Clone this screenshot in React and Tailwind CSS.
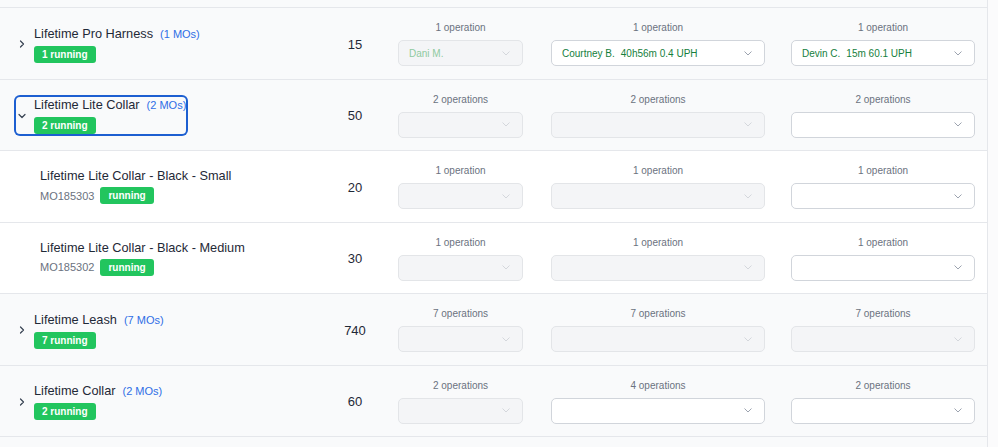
import React from 'react';

const ROWS = [
  {
    kind: 'parent', name: 'Lifetime Pro Harness', mos: '(1 MOs)', running: '1 running', qty: 15,
    ops: [
      { label: '1 operation', enabled: false, who: 'Dani M.' },
      { label: '1 operation', enabled: true, who: 'Courtney B.', stat: '40h56m 0.4 UPH' },
      { label: '1 operation', enabled: true, who: 'Devin C.', stat: '15m 60.1 UPH' },
    ],
  },
  {
    kind: 'parent', open: true, focused: true, name: 'Lifetime Lite Collar', mos: '(2 MOs)', running: '2 running', qty: 50,
    ops: [
      { label: '2 operations', enabled: false },
      { label: '2 operations', enabled: false },
      { label: '2 operations', enabled: true },
    ],
  },
  {
    kind: 'child', name: 'Lifetime Lite Collar - Black - Small', mo: 'MO185303', qty: 20,
    ops: [
      { label: '1 operation', enabled: false },
      { label: '1 operation', enabled: false },
      { label: '1 operation', enabled: true },
    ],
  },
  {
    kind: 'child', name: 'Lifetime Lite Collar - Black - Medium', mo: 'MO185302', qty: 30,
    ops: [
      { label: '1 operation', enabled: false },
      { label: '1 operation', enabled: false },
      { label: '1 operation', enabled: true },
    ],
  },
  {
    kind: 'parent', name: 'Lifetime Leash', mos: '(7 MOs)', running: '7 running', qty: 740,
    ops: [
      { label: '7 operations', enabled: false },
      { label: '7 operations', enabled: false },
      { label: '7 operations', enabled: false },
    ],
  },
  {
    kind: 'parent', name: 'Lifetime Collar', mos: '(2 MOs)', running: '2 running', qty: 60,
    ops: [
      { label: '2 operations', enabled: false },
      { label: '4 operations', enabled: true },
      { label: '2 operations', enabled: true },
    ],
  },
];

const COL_CLASSES = ['w-[125px] ml-2', 'w-[214px] ml-[28px]', 'w-[184px] ml-[26px]'];

const Chevron = ({ open, className = '' }) => (
  <svg width="8" height="8" viewBox="0 0 8 8" className={className} fill="none">
    {open ? (
      <polyline points="1,2.5 4,5.5 7,2.5" stroke="currentColor" strokeWidth="1.2" strokeLinecap="round" strokeLinejoin="round" />
    ) : (
      <polyline points="2.5,1 5.5,4 2.5,7" stroke="currentColor" strokeWidth="1.2" strokeLinecap="round" strokeLinejoin="round" />
    )}
  </svg>
);

const Badge = ({ children }) => (
  <span className="block h-[17px] px-2 rounded-[3px] bg-[#22c55e] text-white text-[10px] font-bold leading-[17px]">
    {children}
  </span>
);

const OpSelect = ({ op }) => (
  <div className={`h-[26px] w-full rounded-[5px] border flex items-center justify-between pl-[10px] pr-[12px] ${
    op.enabled ? 'bg-white border-[#d1d5db]' : 'bg-[#f4f5f7] border-[#e3e5e8]'
  }`}>
    <span className={`text-[10px] whitespace-nowrap ${op.enabled ? 'text-[#15803d]' : 'text-[#8fcaa0]'}`}>
      {op.who}
      {op.stat && <span className="ml-[6px]">{op.stat}</span>}
    </span>
    <svg width="8" height="5" viewBox="0 0 8 5" fill="none" className={op.enabled ? 'text-[#9ca3af]' : 'text-[#d4d7dc]'}>
      <polyline points="0.5,0.5 4,4 7.5,0.5" stroke="currentColor" strokeWidth="1" />
    </svg>
  </div>
);

const NameCell = ({ row }) => {
  if (row.kind === 'child') {
    return (
      <div className="w-[320px] pl-10">
        <div className="text-[12.75px] leading-4 text-[#1f2937]">{row.name}</div>
        <div className="flex items-center gap-[6px] mt-[3px]">
          <span className="text-[11px] leading-4 text-[#6b7280]">{row.mo}</span>
          <Badge>running</Badge>
        </div>
      </div>
    );
  }
  return (
    <div className="w-[320px] pl-4 pt-[2px]">
      <div className={`inline-flex items-center pl-[2px] rounded-[4px] ${row.focused ? 'ring-2 ring-[#1d5fd1]' : ''}`}>
        <Chevron open={row.open} className="text-[#374151]" />
        <div className="ml-2">
          <div className="flex items-baseline h-4 leading-4">
            <span className="text-[12.75px] text-[#1f2937]">{row.name}</span>
            <span className="ml-[7px] text-[11px] text-[#2f6ee6]">{row.mos}</span>
          </div>
          <div className="mt-1 flex">
            <Badge>{row.running}</Badge>
          </div>
        </div>
      </div>
    </div>
  );
};

export default function App() {
  return (
    <div className="w-[998px] h-[447px] overflow-hidden bg-[#fbfbfc] font-['Liberation_Sans',Arial,sans-serif]">
      <div className="w-[988px] h-full border-r border-[#e5e7eb] bg-[#f9fafb]">
        <div className="h-[8px] border-b border-[#e5e7eb]" />
        {ROWS.map((row) => (
          <div key={row.name}
            className={`h-[71.5px] flex items-center border-b border-[#e5e7eb] ${row.kind === 'child' ? 'bg-white' : 'bg-[#f9fafb]'}`}>
            <NameCell row={row} />
            <div className="w-[70px] text-center text-[13px] text-[#1f2937] pt-[2px]">{row.qty}</div>
            {row.ops.map((op, i) => (
              <div key={i} className={`flex flex-col items-center ${COL_CLASSES[i]}`}>
                <div className="text-[10px] leading-4 text-[#6b7280]">{op.label}</div>
                <div className="w-full mt-1">
                  <OpSelect op={op} />
                </div>
              </div>
            ))}
          </div>
        ))}
      </div>
    </div>
  );
}
